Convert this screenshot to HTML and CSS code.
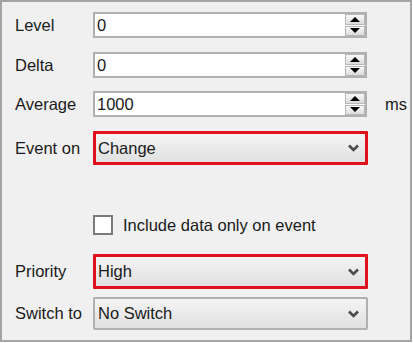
FILE: index.html
```html
<!DOCTYPE html>
<html lang="en">
<head>
    <meta charset="UTF-8">
    <title>Event settings</title>
    <link rel="stylesheet" href="styles.css">
</head>
<body>
    <div class="panel">
        <div class="row row-level">
            <span class="label">Level</span>
            <div class="spin-field">
                <span class="value">0</span>
                <div class="spinner">
                    <span class="spin-btn up"></span>
                    <span class="spin-btn down"></span>
                </div>
            </div>
        </div>

        <div class="row row-delta">
            <span class="label">Delta</span>
            <div class="spin-field">
                <span class="value">0</span>
                <div class="spinner">
                    <span class="spin-btn up"></span>
                    <span class="spin-btn down"></span>
                </div>
            </div>
        </div>

        <div class="row row-average">
            <span class="label">Average</span>
            <div class="spin-field">
                <span class="value">1000</span>
                <div class="spinner">
                    <span class="spin-btn up"></span>
                    <span class="spin-btn down"></span>
                </div>
            </div>
            <span class="unit">ms</span>
        </div>

        <div class="row row-event">
            <span class="label">Event on</span>
            <div class="combo highlight">
                <span class="value">Change</span>
                <svg class="chevron" width="11" height="8" viewBox="0 0 11 8"><path d="M1 1.5 L5.5 6 L10 1.5" fill="none" stroke="#4a4a4a" stroke-width="2.6"/></svg>
            </div>
        </div>

        <div class="row row-check">
            <span class="label"></span>
            <label class="check">
                <span class="box"></span>
                <span>Include data only on event</span>
            </label>
        </div>

        <div class="row row-priority">
            <span class="label">Priority</span>
            <div class="combo highlight">
                <span class="value">High</span>
                <svg class="chevron" width="11" height="8" viewBox="0 0 11 8"><path d="M1 1.5 L5.5 6 L10 1.5" fill="none" stroke="#4a4a4a" stroke-width="2.6"/></svg>
            </div>
        </div>

        <div class="row row-switch">
            <span class="label">Switch to</span>
            <div class="combo">
                <span class="value">No Switch</span>
                <svg class="chevron" width="11" height="8" viewBox="0 0 11 8"><path d="M1 1.5 L5.5 6 L10 1.5" fill="none" stroke="#4a4a4a" stroke-width="2.6"/></svg>
            </div>
        </div>
    </div>
</body>
</html>
```

FILE: styles.css
```css
body {
    margin: 0;
    background: #ffffff;
    font-family: "Liberation Sans", Arial, sans-serif;
    font-size: 16.5px;
    color: #1a1a1a;
}

.panel {
    box-sizing: border-box;
    width: 412px;
    height: 342px;
    border: 2px solid #a4a4a4;
    background: #f0f0f0;
    padding: 10px 0 0 13px;
}

.row {
    display: flex;
    align-items: center;
}

.label {
    width: 78px;
    flex: none;
}

.row-level { height: 26px; }
.row-delta { height: 26px; margin-top: 14px; }
.row-average { height: 26px; margin-top: 13px; }
.row-event { height: 34px; margin-top: 14px; }
.row-check { height: 20px; margin-top: 50px; }
.row-priority { height: 35px; margin-top: 19px; }
.row-switch { height: 33px; margin-top: 8px; }

.spin-field {
    box-sizing: border-box;
    width: 274px;
    height: 26px;
    border: 2px solid #b0b0b0;
    background: #ffffff;
    display: flex;
    align-items: center;
    justify-content: space-between;
    padding: 0 0 0 2px;
}

.spinner {
    display: flex;
    flex-direction: column;
    gap: 1px;
    width: 20px;
    height: 22px;
}

.spin-btn {
    flex: 1;
    box-sizing: border-box;
    border: 1px solid #b8b8b8;
    background: linear-gradient(#f8f8f8, #dcdcdc);
    display: flex;
    align-items: center;
    justify-content: center;
}

.spin-btn::after {
    content: "";
    border-left: 5px solid transparent;
    border-right: 5px solid transparent;
}

.spin-btn.up::after {
    border-bottom: 5px solid #000;
}

.spin-btn.down::after {
    border-top: 5px solid #000;
}

.unit {
    margin-left: 18px;
}

.combo {
    box-sizing: border-box;
    width: 275px;
    height: 100%;
    border: 2px solid #b0b0b0;
    border-radius: 2px;
    background: linear-gradient(#f4f4f4, #e0e0e0);
    display: flex;
    align-items: center;
    justify-content: space-between;
    padding: 0 7px 0 3px;
}

.combo.highlight {
    border: 3px solid #e0101c;
    border-radius: 1px;
    padding-left: 2px;
    padding-right: 6px;
}

.check {
    display: flex;
    align-items: center;
    gap: 10px;
}

.box {
    box-sizing: border-box;
    width: 20px;
    height: 20px;
    border: 2px solid #7a7a7a;
    background: #ffffff;
}
```
